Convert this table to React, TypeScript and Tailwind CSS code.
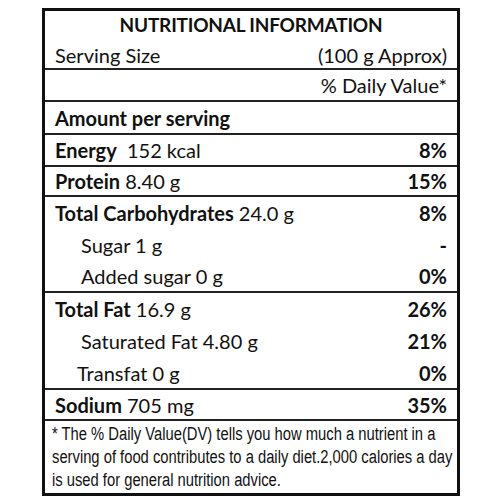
import React from "react";

const font = { fontFamily: "Lato, 'Open Sans', sans-serif" };

type Row = {
  label: string;
  value: string;
  dv: string;
  bold?: boolean;
  indent?: string;
  h: string;
  line?: boolean;
};

const rows: Row[] = [
  { label: "Energy", value: "\u00a0 152 kcal", dv: "8%", bold: true, h: "h-[32px]", line: true },
  { label: "Protein", value: " 8.40 g", dv: "15%", bold: true, h: "h-[30px]", line: true },
  { label: "Total Carbohydrates", value: " 24.0 g", dv: "8%", bold: true, h: "h-[32px]" },
  { label: "Sugar 1 g", value: "", dv: "-", indent: "pl-[36px]", h: "h-[32px]" },
  { label: "Added sugar 0 g", value: "", dv: "0%", indent: "pl-[36px]", h: "h-[32px]", line: true },
  { label: "Total Fat", value: " 16.9 g", dv: "26%", bold: true, h: "h-[32px]" },
  { label: "Saturated Fat 4.80 g", value: "", dv: "21%", indent: "pl-[36px]", h: "h-[32px]" },
  { label: "Transfat 0 g", value: "", dv: "0%", indent: "pl-[32px]", h: "h-[33px]", line: true },
  { label: "Sodium", value: " 705 mg", dv: "35%", bold: true, h: "h-[31px]", line: true },
];

export default function App() {
  return (
    <div className="w-[500px] h-[500px] bg-white pt-[8px] pl-[42px] overflow-hidden" style={font}>
      <div className="w-[418px] h-[488px] border-[3px] border-[#111] flex flex-col text-[#111]">
        {/* header */}
        <div className="h-[31px] flex items-start justify-center pt-[4px] text-[19px] font-bold leading-none tracking-[-0.2px]">
          NUTRITIONAL INFORMATION
        </div>
        <div className="h-[28px] flex items-center justify-between px-[10px] text-[20px] border-b-2 border-[#222]">
          <span>Serving Size</span>
          <span>(100 g Approx)</span>
        </div>
        <div className="h-[32px] flex items-center justify-end px-[10px] text-[20px] border-b-2 border-[#222]">
          % Daily Value*
        </div>
        <div className="h-[33px] flex items-center px-[10px] text-[20px] font-bold border-b-2 border-[#222]">
          Amount per serving
        </div>

        {rows.map((r, i) => (
          <div
            key={i}
            className={`${r.h} flex items-center justify-between px-[10px] text-[20px] ${
              r.line ? "border-b-2 border-[#222]" : ""
            } ${r.indent ?? ""}`}
          >
            <span className="whitespace-pre">
              {r.bold ? <b>{r.label}</b> : r.label}
              {r.value}
            </span>
            <span className="font-bold">{r.dv}</span>
          </div>
        ))}

        {/* footnote, narrow face like Arial Narrow */}
        <div className="flex-1 pl-[7px] pt-[2px] overflow-hidden">
          <p
            className="w-[505px] origin-top-left scale-x-[0.82] text-[18px] leading-[23px]"
            style={{ fontFamily: "'Liberation Sans', Arial, sans-serif" }}
          >
            * The % Daily Value(DV) tells you how much a nutrient in a serving of food contributes to a daily diet.2,000 calories a day is used for general nutrition advice.
          </p>
        </div>
      </div>
    </div>
  );
}
